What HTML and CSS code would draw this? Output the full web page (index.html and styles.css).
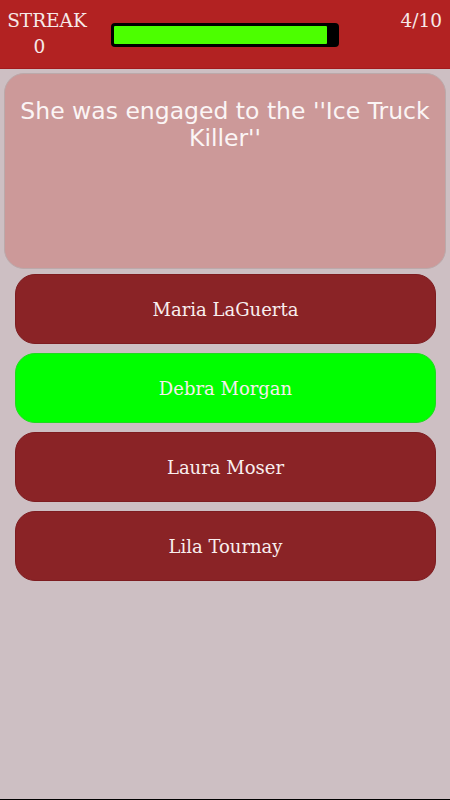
FILE: index.html
```html
<!DOCTYPE html>
<html lang="en">
<head>
    <meta charset="UTF-8">
    <meta name="viewport" content="width=device-width, initial-scale=1.0">
    <title>Dexter Quiz</title>
    <link rel="stylesheet" href="styles.css">
</head>
<body>
    <div class="screen">
        <div class="top-bar">
            <div class="streak">
                <span class="streak-label">STREAK</span>
                <span class="streak-value">0</span>
            </div>
            <div class="progress">
                <div class="progress-fill" style="width: 96%"></div>
            </div>
            <div class="counter">4/10</div>
        </div>

        <div class="question-card">
            <p class="question">She was engaged to the ''Ice Truck Killer''</p>
        </div>

        <div class="answers">
            <button class="answer">Maria LaGuerta</button>
            <button class="answer correct">Debra Morgan</button>
            <button class="answer">Laura Moser</button>
            <button class="answer">Lila Tournay</button>
        </div>
    </div>
</body>
</html>
```

FILE: styles.css
```css
* {
    box-sizing: border-box;
}

body {
    margin: 0;
    padding: 0;
    background-color: #cdbfc3;
    font-family: "DejaVu Serif", serif;
}

.screen {
    height: 800px;
    border-bottom: 1px solid #000;
    overflow: hidden;
}

.top-bar {
    height: 69px;
    background-color: #b22222;
    border-bottom: 1px solid #a31a1c;
    display: flex;
    align-items: flex-start;
    color: #f6e9e9;
    font-size: 18.5px;
}

.streak {
    display: flex;
    flex-direction: column;
    align-items: center;
    width: 80px;
    margin-left: 7px;
    padding-top: 8px;
    line-height: 26px;
}

.streak-value {
    margin-right: 15px;
}

.progress {
    width: 228px;
    height: 24px;
    margin-top: 23px;
    margin-left: 24px;
    background-color: #000;
    border-radius: 4px;
    padding: 3px;
}

.progress-fill {
    height: 100%;
    background-color: #4cff00;
    border-radius: 1px;
}

.counter {
    margin-left: auto;
    margin-right: 8px;
    padding-top: 8px;
    line-height: 26px;
}

.question-card {
    height: 196px;
    margin: 4px 4px 0 4px;
    background-color: #cc9999;
    border: 1px solid #bba9aa;
    border-radius: 20px;
    padding: 24px 8px 0 8px;
}

.question {
    margin: 0;
    text-align: center;
    font-family: "DejaVu Sans", sans-serif;
    font-size: 23.5px;
    line-height: 27px;
    color: #fbf5f5;
}

.answers {
    display: flex;
    flex-direction: column;
    gap: 9px;
    padding: 5px 14px 0 15px;
}

.answer {
    height: 70px;
    display: flex;
    align-items: center;
    justify-content: center;
    background-color: #8a2326;
    border: 1px solid #7d1c20;
    border-radius: 20px;
    color: #f8eeee;
    font-family: "DejaVu Serif", serif;
    font-size: 18px;
    padding: 0;
}

.answer.correct {
    background-color: #00ff00;
    border-color: #1edc1e;
}
```
